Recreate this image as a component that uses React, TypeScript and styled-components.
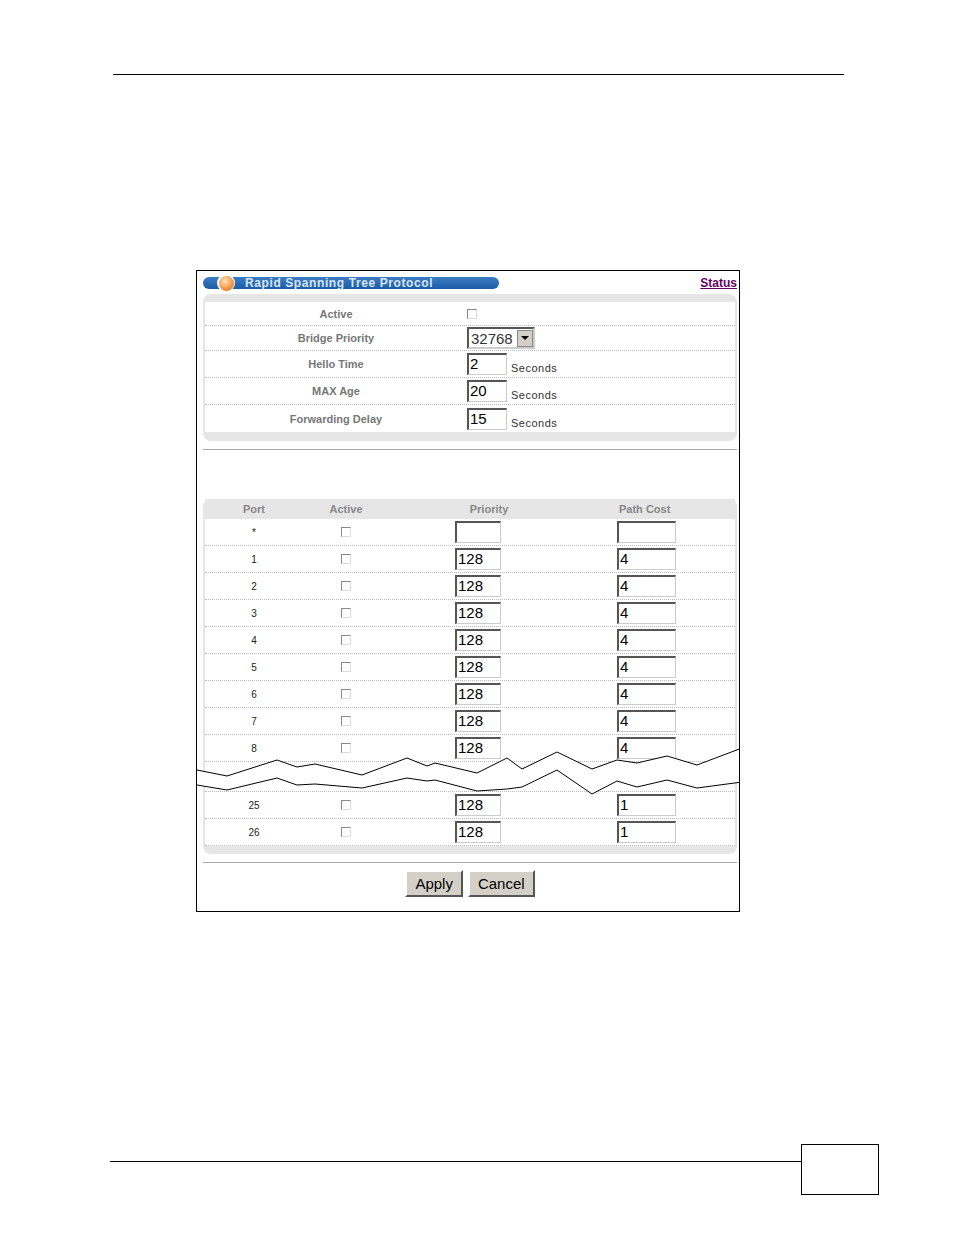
import styled, { createGlobalStyle } from 'styled-components';

const Global = createGlobalStyle`
  body { margin: 0; background: #fff; font-family: Arial, "Liberation Sans", sans-serif; }
  * { box-sizing: border-box; }
`;

const Page = styled.div`
  position: relative;
  width: 954px;
  height: 1235px;
`;

const TopRule = styled.div`
  position: absolute;
  left: 113px;
  top: 74px;
  width: 731px;
  border-top: 1px solid #000;
`;

const BottomRule = styled.div`
  position: absolute;
  left: 110px;
  top: 1161px;
  width: 691px;
  border-top: 1px solid #000;
`;

const PageBox = styled.div`
  position: absolute;
  left: 801px;
  top: 1144px;
  width: 78px;
  height: 51px;
  border: 1px solid #000;
`;

const Frame = styled.div`
  position: absolute;
  left: 196px;
  top: 270px;
  width: 544px;
  height: 642px;
  border: 1px solid #000;
  padding: 0 2px 0 6px;
  overflow: hidden;
`;

const TitleBar = styled.div`
  display: flex;
  justify-content: space-between;
  align-items: center;
  height: 22px;
`;

const Pill = styled.div`
  position: relative;
  width: 296px;
  height: 12px;
  margin-top: 2px;
  border-radius: 6px;
  background: linear-gradient(#3b7dc4, #1c5ba6);
  color: #d8e6f7;
  font-size: 12px;
  font-weight: bold;
  letter-spacing: 0.6px;
  line-height: 12px;
  padding-left: 42px;
`;

const Orb = styled.div`
  position: absolute;
  left: 14px;
  top: -3px;
  width: 18px;
  height: 18px;
  border-radius: 50%;
  background: #fff;
  display: flex;
  align-items: center;
  justify-content: center;
  &::after {
    content: '';
    width: 15px;
    height: 15px;
    border-radius: 50%;
    background: radial-gradient(circle at 40% 35%, #ffe3c0, #f2913a 60%, #d06a1a);
  }
`;

const StatusLink = styled.a`
  color: #660066;
  font-size: 12px;
  font-weight: bold;
  text-decoration: underline;
  margin-top: 2px;
`;

const Panel = styled.div`
  background: #e6e6e6;
  border-radius: 8px;
  padding: 8px 2px 9px 2px;
  margin-top: 1px;
`;

const Inner = styled.div`
  background: #fff;
`;

const GeneralRow = styled.div<{ $h?: number }>`
  display: grid;
  grid-template-columns: 262px 1fr;
  height: ${(p) => p.$h ?? 27}px;
  align-items: center;
  border-bottom: 1px dotted #bbb;
  &:last-child { border-bottom: none; }
`;

const Label = styled.div`
  text-align: center;
  font-size: 11px;
  font-weight: bold;
  color: #777;
`;

const Value = styled.div`
  display: flex;
  align-items: flex-end;
  gap: 4px;
  font-size: 12px;
  color: #333;
`;

const Check = styled.span`
  display: inline-block;
  width: 10px;
  height: 10px;
  border: 1px solid #888;
  border-right-color: #ddd;
  border-bottom-color: #ddd;
  background: #fff;
`;

const Field = styled.div<{ $w: number }>`
  width: ${(p) => p.$w}px;
  height: 22px;
  border: 1px solid #ccc;
  border-top: 2px solid #555;
  border-left: 2px solid #555;
  font-size: 15px;
  line-height: 18px;
  padding-left: 1px;
  color: #000;
  background: #fff;
`;

const Select = styled.div`
  display: flex;
  height: 22px;
  border: 2px solid #555;
  border-right-color: #ccc;
  border-bottom-color: #ccc;
  font-size: 15px;
  align-items: center;
  padding-left: 2px;
`;

const Arrow = styled.div`
  width: 16px;
  height: 17px;
  margin-left: 4px;
  background: #d4d0c8;
  border: 1px solid #888;
  display: flex;
  align-items: center;
  justify-content: center;
  &::after {
    content: '';
    border: 4px solid transparent;
    border-top: 4px solid #000;
    margin-top: 4px;
  }
`;

const Secs = styled.span`
  font-size: 11px;
  letter-spacing: 0.5px;
  margin-bottom: 1px;
`;

const Rule = styled.div<{ $mt: number }>`
  border-top: 1px solid #aaa;
  margin-top: ${(p) => p.$mt}px;
`;

const PortPanel = styled.div`
  background: #e6e6e6;
  border-radius: 8px;
  padding: 0 2px 8px;
  margin-top: 49px;
`;

const PortRow = styled.div<{ $head?: boolean }>`
  display: grid;
  grid-template-columns: 98px 86px 200px 1fr;
  height: ${(p) => (p.$head ? 20 : 27)}px;
  align-items: center;
  background: ${(p) => (p.$head ? '#e6e6e6' : '#fff')};
  border-bottom: ${(p) => (p.$head ? 'none' : '1px dotted #bbb')};
`;

const Cell = styled.div<{ $pl?: number }>`
  padding-left: ${(p) => p.$pl ?? 0}px;
  font-size: 10px;
  color: #222;
  display: flex;
  justify-content: ${(p) => (p.$pl !== undefined ? 'flex-start' : 'center')};
`;

const HeadCell = styled.div<{ $pl?: number }>`
  text-align: ${(p) => (p.$pl !== undefined ? 'left' : 'center')};
  padding-left: ${(p) => p.$pl ?? 0}px;
  font-size: 11px;
  font-weight: bold;
  color: #888;
`;

const Break = styled.div`
  height: 30px;
  background: #fff;
  border-bottom: 1px dotted #bbb;
  position: relative;
  & svg { position: absolute; left: -8px; top: -14px; }
`;

const Buttons = styled.div`
  display: flex;
  justify-content: center;
  gap: 5px;
  margin-top: 7px;
`;

const Button = styled.button`
  height: 27px;
  padding: 0 8px;
  font-family: Arial, "Liberation Sans", sans-serif;
  font-size: 15px;
  background: #d4d0c8;
  border: 2px solid;
  border-color: #fff #555 #555 #fff;
  color: #000;
`;

const ports = ['*', '1', '2', '3', '4', '5', '6', '7', '8'];

const top = 'M0 22 L30 28 L80 12 L100 19 L118 16 L165 27 L210 10 L230 18 L238 15 L280 25 L310 10 L325 21 L360 4 L395 21 L420 12 L440 15 L470 8 L500 17 L545 0';
const bottom = 'M0 37 L30 42 L80 30 L100 37 L118 36 L165 40 L210 30 L230 33 L238 32 L280 43 L310 41 L325 39 L360 22 L395 46 L420 33 L440 39 L470 32 L500 40 L545 34';

export default function App() {
  return (
    <Page>
      <Global />
      <TopRule />
      <Frame>
        <TitleBar>
          <Pill>
            <Orb />
            Rapid Spanning Tree Protocol
          </Pill>
          <StatusLink href="#">Status</StatusLink>
        </TitleBar>
        <Panel>
          <Inner>
            <GeneralRow $h={24}>
              <Label>Active</Label>
              <Value><Check /></Value>
            </GeneralRow>
            <GeneralRow $h={25}>
              <Label>Bridge Priority</Label>
              <Value><Select>32768<Arrow /></Select></Value>
            </GeneralRow>
            {[['Hello Time', '2'], ['MAX Age', '20'], ['Forwarding Delay', '15']].map(([l, v]) => (
              <GeneralRow key={l}>
                <Label>{l}</Label>
                <Value><Field $w={40}>{v}</Field><Secs>Seconds</Secs></Value>
              </GeneralRow>
            ))}
          </Inner>
        </Panel>
        <Rule $mt={8} />
        <PortPanel>
          <PortRow $head>
            <HeadCell>Port</HeadCell>
            <HeadCell>Active</HeadCell>
            <HeadCell>Priority</HeadCell>
            <HeadCell $pl={30}>Path Cost</HeadCell>
          </PortRow>
          {ports.map((p) => (
            <PortRow key={p}>
              <Cell>{p}</Cell>
              <Cell><Check /></Cell>
              <Cell $pl={66}><Field $w={46}>{p === '*' ? '' : '128'}</Field></Cell>
              <Cell $pl={28}><Field $w={59}>{p === '*' ? '' : '4'}</Field></Cell>
            </PortRow>
          ))}
          <Break>
            <svg width="545" height="52" viewBox="0 0 545 52">
              <path d={`${top} L545 34 L500 40 L470 32 L440 39 L420 33 L395 46 L360 22 L325 39 L310 41 L280 43 L238 32 L230 33 L210 30 L165 40 L118 36 L100 37 L80 30 L30 42 L0 37 Z`} fill="#fff" />
              <path d={top} fill="none" stroke="#000" strokeWidth="1" />
              <path d={bottom} fill="none" stroke="#000" strokeWidth="1" />
            </svg>
          </Break>
          {['25', '26'].map((p) => (
            <PortRow key={p}>
              <Cell>{p}</Cell>
              <Cell><Check /></Cell>
              <Cell $pl={66}><Field $w={46}>128</Field></Cell>
              <Cell $pl={28}><Field $w={59}>1</Field></Cell>
            </PortRow>
          ))}
        </PortPanel>
        <Rule $mt={8} />
        <Buttons>
          <Button>Apply</Button>
          <Button>Cancel</Button>
        </Buttons>
      </Frame>
      <BottomRule />
      <PageBox />
    </Page>
  );
}
